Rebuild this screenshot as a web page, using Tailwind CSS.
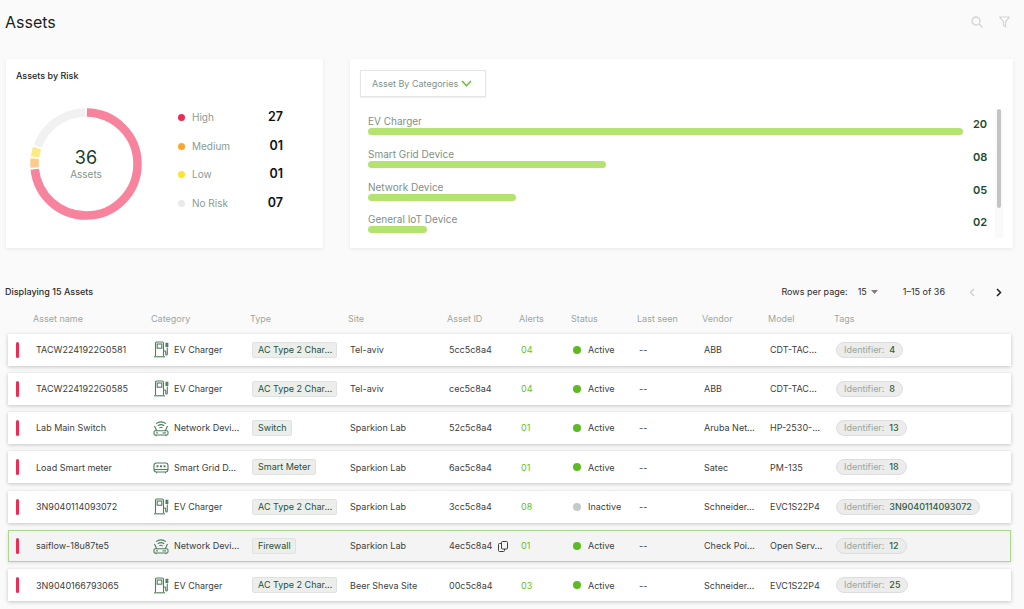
<!DOCTYPE html>
<html>
<head>
    <title>Assets</title>
    <meta charset="UTF-8">
    <meta name="viewport" content="width=device-width, initial-scale=1.0">
    <script src="https://cdn.jsdelivr.net/npm/@tailwindcss/browser@4"></script>
</head>
<body class="h-[609px] overflow-hidden bg-[#fafafa] font-['Inter',sans-serif] text-[9px] text-[#3c403d]">
    <!-- shared row icons -->
    <svg class="hidden">
        <symbol id="ev" viewBox="0 0 16 17">
            <g fill="none" stroke="#4f7f5e" stroke-width="1.1">
                <path d="M2.5 15V2.2q0-1.2 1.2-1.2h5.6q1.2 0 1.2 1.2V15"/>
                <rect x="4.2" y="3" width="4.6" height="4.2"/>
                <path d="M1 15.8h11"/>
                <path d="M10.5 10h1.4q.8 0 .8.8v2.2q0 1 .8 1t.8-1V6.5"/>
                <path d="M13 2.2h1.8v3.3H13z" fill="#4f7f5e"/>
            </g>
        </symbol>
        <symbol id="net" viewBox="0 0 16 17">
            <g fill="none" stroke="#4f7f5e" stroke-width="1.1">
                <path d="M3 3.600Q8 .2 13 3.600"/>
                <path d="M4.800 5.800Q8 3.400 11.200 5.800"/>
                <path d="M6.400 7.800Q8 6.600 9.600 7.800"/>
                <path d="M1.500 6l2.300 5M14.500 6l-2.300 5"/>
                <rect x="1" y="10.800" width="14" height="4.200" rx="1.200"/>
                <path d="M3 15v1.300M13 15v1.300"/>
                <path d="M9.500 12.900h3.500"/>
            </g>
            <circle cx="4" cy="12.900" r=".8" fill="#4f7f5e"/>
        </symbol>
        <symbol id="grid" viewBox="0 0 16 17">
            <g fill="none" stroke="#4f7f5e" stroke-width="1.1">
                <rect x="1" y="4" width="14" height="9" rx="2.500"/>
                <path d="M1 10.500h14"/>
                <path d="M3.500 13v1.200M12.500 13v1.200"/>
            </g>
            <g fill="#4f7f5e">
                <rect x="3.500" y="6.300" width="2" height="2"/>
                <rect x="7" y="6.300" width="2" height="2"/>
                <rect x="10.500" y="6.300" width="2" height="2"/>
            </g>
        </symbol>
    </svg>

    <header class="flex h-[44px] items-center justify-between pl-[5px] pr-[14px]">
        <h1 class="text-[16px] font-normal text-[#1c1f1d]">Assets</h1>
        <div class="flex items-center gap-[16px]">
            <svg class="h-[12px] w-[12px]" viewBox="0 0 12 12" fill="none" stroke="#d2d4d2" stroke-width="1.300"><circle cx="5" cy="5" r="4"/><path d="M8 8l3.500 3.500"/></svg>
            <svg class="h-[12px] w-[11px]" viewBox="0 0 11 12" fill="none" stroke="#d2d4d2" stroke-width="1.200"><path d="M.7 1h9.600L6.600 5.800v5L4.400 9.500V5.800z"/></svg>
        </div>
    </header>

    <section class="mt-[15px] flex h-[189px] pl-[6px] pr-[11px]">
        <!-- risk card -->
        <div class="w-[317px] shrink-0 bg-white px-[10px] pt-[11px] shadow-[0_1px_4px_rgba(0,0,0,0.08)]">
            <h2 class="text-[9px] font-medium leading-[12px] text-[#1c1f1d]">Assets by Risk</h2>
            <div class="mt-[26px] flex items-start">
                <div class="relative ml-[14px] h-[112px] w-[112px] shrink-0">
                    <svg class="h-full w-full -rotate-90" viewBox="0 0 112 112" fill="none" stroke-width="8.500">
                        <circle cx="56" cy="56" r="51.500" pathLength="360" stroke="#f8839c" stroke-dasharray="263 97" stroke-dashoffset="-1"/>
                        <circle cx="56" cy="56" r="51.500" pathLength="360" stroke="#fdcb8a" stroke-dasharray="10 350" stroke-dashoffset="-266"/>
                        <circle cx="56" cy="56" r="51.500" pathLength="360" stroke="#fdeb80" stroke-dasharray="10 350" stroke-dashoffset="-278"/>
                        <circle cx="56" cy="56" r="51.500" pathLength="360" stroke="#f1f1f1" stroke-dasharray="69 291" stroke-dashoffset="-290"/>
                    </svg>
                    <div class="absolute inset-0 flex flex-col items-center justify-center">
                        <span class="text-[18px] leading-[20px] text-[#17402a]">36</span>
                        <span class="text-[10px] leading-[13px] text-[#83968a]">Assets</span>
                    </div>
                </div>
                <ul class="-mt-[5px] ml-[36px] w-[105px]">
                    <li class="flex h-[28.700px] items-center"><span class="h-[7px] w-[7px] rounded-full bg-[#ee2a55]"></span><span class="ml-[7px] flex-1 text-[10px] text-[#8a9b90]">High</span><span class="text-[12.500px] font-semibold text-[#111]">27</span></li>
                    <li class="flex h-[28.700px] items-center"><span class="h-[7px] w-[7px] rounded-full bg-[#fba62d]"></span><span class="ml-[7px] flex-1 text-[10px] text-[#8a9b90]">Medium</span><span class="text-[12.500px] font-semibold text-[#111]">01</span></li>
                    <li class="flex h-[28.700px] items-center"><span class="h-[7px] w-[7px] rounded-full bg-[#fde32c]"></span><span class="ml-[7px] flex-1 text-[10px] text-[#8a9b90]">Low</span><span class="text-[12.500px] font-semibold text-[#111]">01</span></li>
                    <li class="flex h-[28.700px] items-center"><span class="h-[7px] w-[7px] rounded-full bg-[#eaeaea]"></span><span class="ml-[7px] flex-1 text-[10px] text-[#8a9b90]">No Risk</span><span class="text-[12.500px] font-semibold text-[#111]">07</span></li>
                </ul>
            </div>
        </div>

        <!-- categories card -->
        <div class="ml-[27px] flex-1 bg-white pl-[10px] pt-[11px] shadow-[0_1px_4px_rgba(0,0,0,0.08)]">
            <button class="flex h-[27px] w-[126px] items-center justify-between whitespace-nowrap border border-[#e4e6e4] pl-[11px] pr-[13px] text-[9px] text-[#82938a] shadow-[0_1px_1px_rgba(0,0,0,0.05)]">
                Asset By Categories
                <svg class="h-[7px] w-[11px]" viewBox="0 0 11 7" fill="none" stroke="#62bf2a" stroke-width="1.400"><path d="M1 1l4.500 4.700L10 1"/></svg>
            </button>
            <div class="relative mt-[18px] h-[123px]">
                <div class="absolute -top-[6px] right-[10px] h-[129px] w-[8px] bg-[#fafafa]">
                    <div class="mx-auto h-[99px] w-[4px] rounded-full bg-[#c4c4c4]"></div>
                </div>
                <div class="flex h-[32.800px] pl-[8px]">
                    <div class="w-[595px]">
                        <div class="text-[10px] leading-[13px] text-[#7f9085]">EV Charger</div>
                        <div class="h-[7px] rounded-full bg-[#b5e36f]"></div>
                    </div>
                    <span class="ml-[10px] mt-[3px] text-[11px] font-semibold leading-[13px] text-[#1d4a2d]">20</span>
                </div>
                <div class="flex h-[32.800px] pl-[8px]">
                    <div class="w-[595px]">
                        <div class="text-[10px] leading-[13px] text-[#7f9085]">Smart Grid Device</div>
                        <div class="h-[7px] w-[238px] rounded-full bg-[#b5e36f]"></div>
                    </div>
                    <span class="ml-[10px] mt-[3px] text-[11px] font-semibold leading-[13px] text-[#1d4a2d]">08</span>
                </div>
                <div class="flex h-[32.800px] pl-[8px]">
                    <div class="w-[595px]">
                        <div class="text-[10px] leading-[13px] text-[#7f9085]">Network Device</div>
                        <div class="h-[7px] w-[148px] rounded-full bg-[#b5e36f]"></div>
                    </div>
                    <span class="ml-[10px] mt-[3px] text-[11px] font-semibold leading-[13px] text-[#1d4a2d]">05</span>
                </div>
                <div class="flex h-[24px] pl-[8px]">
                    <div class="w-[595px]">
                        <div class="text-[10px] leading-[13px] text-[#7f9085]">General IoT Device</div>
                        <div class="h-[7px] w-[59px] rounded-full bg-[#b5e36f]"></div>
                    </div>
                    <span class="ml-[10px] mt-[3px] text-[11px] font-semibold leading-[13px] text-[#1d4a2d]">02</span>
                </div>
            </div>
        </div>
    </section>

    <section class="mt-[37px]">
        <div class="flex h-[14px] items-center pl-[5px] pr-[22px] text-[#2a2d2b]">
            <span class="font-medium">Displaying 15 Assets</span>
            <span class="ml-auto">Rows per page:</span>
            <span class="ml-[10px]">15</span>
            <svg class="ml-[4px] h-[4px] w-[7px]" viewBox="0 0 7 4" fill="#7c7f7d"><path d="M0 0h7L3.500 4z"/></svg>
            <span class="ml-[25px]">1–15 of 36</span>
            <svg class="ml-[24px] h-[9px] w-[6px]" viewBox="0 0 6 9" fill="none" stroke="#c9cbc9" stroke-width="1.200"><path d="M5 1L1.500 4.500 5 8"/></svg>
            <svg class="ml-[21px] h-[9px] w-[6px]" viewBox="0 0 6 9" fill="none" stroke="#222" stroke-width="1.500"><path d="M1 1l3.500 3.500L1 8"/></svg>
        </div>

        <div class="ml-[6px] mt-[13px] grid h-[14px] grid-cols-[28px_117px_99px_98px_99px_72px_52px_66px_65px_66px_66px_1fr] items-center text-[#9aa89f]">
            <span class="col-start-2 -ml-[1px]">Asset name</span><span>Category</span><span>Type</span><span>Site</span><span>Asset ID</span><span>Alerts</span><span>Status</span><span>Last seen</span><span>Vendor</span><span>Model</span><span>Tags</span>
        </div>

        <div class="ml-[8px] mr-[13px] mt-[7.500px] flex flex-col gap-[7.330px]">
            <div class="grid h-[32px] grid-cols-[28px_117px_99px_98px_99px_72px_52px_66px_65px_66px_66px_1fr] items-center bg-white shadow-[0_1px_4px_rgba(0,0,0,0.22)]">
                <span class="ml-[8px] h-[16px] w-[2.500px] rounded-full bg-[#ee2a55]"></span>
                <span>TACW2241922G0581</span>
                <span class="flex items-center"><svg class="h-[17px] w-[16px]"><use href="#ev"/></svg><span class="ml-[5px]">EV Charger</span></span>
                <span class="justify-self-start rounded-[2px] border border-[#e0e2e0] bg-[#eceeec] pl-[5px] pr-[4px] py-[1px] leading-[12px] text-[#24523a]">AC Type 2 Char…</span>
                <span>Tel-aviv</span><span>5cc5c8a4</span><span class="text-[#62bf2a]">04</span>
                <span class="flex items-center"><span class="h-[8px] w-[8px] rounded-full bg-[#5cbb22]"></span><span class="ml-[7px]">Active</span></span>
                <span>--</span><span>ABB</span><span>CDT-TAC…</span>
                <span class="justify-self-start rounded-full border border-[#dcdedc] bg-[#ececec] px-[7px] py-[1px] leading-[12px] text-[#98a79d]">Identifier:<b class="ml-[5px] font-medium text-[#2f5d3e]">4</b></span>
            </div>
            <div class="grid h-[32px] grid-cols-[28px_117px_99px_98px_99px_72px_52px_66px_65px_66px_66px_1fr] items-center bg-white shadow-[0_1px_4px_rgba(0,0,0,0.22)]">
                <span class="ml-[8px] h-[16px] w-[2.500px] rounded-full bg-[#ee2a55]"></span>
                <span>TACW2241922G0585</span>
                <span class="flex items-center"><svg class="h-[17px] w-[16px]"><use href="#ev"/></svg><span class="ml-[5px]">EV Charger</span></span>
                <span class="justify-self-start rounded-[2px] border border-[#e0e2e0] bg-[#eceeec] pl-[5px] pr-[4px] py-[1px] leading-[12px] text-[#24523a]">AC Type 2 Char…</span>
                <span>Tel-aviv</span><span>cec5c8a4</span><span class="text-[#62bf2a]">04</span>
                <span class="flex items-center"><span class="h-[8px] w-[8px] rounded-full bg-[#5cbb22]"></span><span class="ml-[7px]">Active</span></span>
                <span>--</span><span>ABB</span><span>CDT-TAC…</span>
                <span class="justify-self-start rounded-full border border-[#dcdedc] bg-[#ececec] px-[7px] py-[1px] leading-[12px] text-[#98a79d]">Identifier:<b class="ml-[5px] font-medium text-[#2f5d3e]">8</b></span>
            </div>
            <div class="grid h-[32px] grid-cols-[28px_117px_99px_98px_99px_72px_52px_66px_65px_66px_66px_1fr] items-center bg-white shadow-[0_1px_4px_rgba(0,0,0,0.22)]">
                <span class="ml-[8px] h-[16px] w-[2.500px] rounded-full bg-[#ee2a55]"></span>
                <span>Lab Main Switch</span>
                <span class="flex items-center"><svg class="h-[17px] w-[16px]"><use href="#net"/></svg><span class="ml-[5px]">Network Devi…</span></span>
                <span class="justify-self-start rounded-[2px] border border-[#e0e2e0] bg-[#eceeec] pl-[5px] pr-[4px] py-[1px] leading-[12px] text-[#24523a]">Switch</span>
                <span>Sparkion Lab</span><span>52c5c8a4</span><span class="text-[#62bf2a]">01</span>
                <span class="flex items-center"><span class="h-[8px] w-[8px] rounded-full bg-[#5cbb22]"></span><span class="ml-[7px]">Active</span></span>
                <span>--</span><span>Aruba Net…</span><span>HP-2530-…</span>
                <span class="justify-self-start rounded-full border border-[#dcdedc] bg-[#ececec] px-[7px] py-[1px] leading-[12px] text-[#98a79d]">Identifier:<b class="ml-[5px] font-medium text-[#2f5d3e]">13</b></span>
            </div>
            <div class="grid h-[32px] grid-cols-[28px_117px_99px_98px_99px_72px_52px_66px_65px_66px_66px_1fr] items-center bg-white shadow-[0_1px_4px_rgba(0,0,0,0.22)]">
                <span class="ml-[8px] h-[16px] w-[2.500px] rounded-full bg-[#ee2a55]"></span>
                <span>Load Smart meter</span>
                <span class="flex items-center"><svg class="h-[17px] w-[16px]"><use href="#grid"/></svg><span class="ml-[5px]">Smart Grid D…</span></span>
                <span class="justify-self-start rounded-[2px] border border-[#e0e2e0] bg-[#eceeec] pl-[5px] pr-[4px] py-[1px] leading-[12px] text-[#24523a]">Smart Meter</span>
                <span>Sparkion Lab</span><span>6ac5c8a4</span><span class="text-[#62bf2a]">01</span>
                <span class="flex items-center"><span class="h-[8px] w-[8px] rounded-full bg-[#5cbb22]"></span><span class="ml-[7px]">Active</span></span>
                <span>--</span><span>Satec</span><span>PM-135</span>
                <span class="justify-self-start rounded-full border border-[#dcdedc] bg-[#ececec] px-[7px] py-[1px] leading-[12px] text-[#98a79d]">Identifier:<b class="ml-[5px] font-medium text-[#2f5d3e]">18</b></span>
            </div>
            <div class="grid h-[32px] grid-cols-[28px_117px_99px_98px_99px_72px_52px_66px_65px_66px_66px_1fr] items-center bg-white shadow-[0_1px_4px_rgba(0,0,0,0.22)]">
                <span class="ml-[8px] h-[16px] w-[2.500px] rounded-full bg-[#ee2a55]"></span>
                <span>3N9040114093072</span>
                <span class="flex items-center"><svg class="h-[17px] w-[16px]"><use href="#ev"/></svg><span class="ml-[5px]">EV Charger</span></span>
                <span class="justify-self-start rounded-[2px] border border-[#e0e2e0] bg-[#eceeec] pl-[5px] pr-[4px] py-[1px] leading-[12px] text-[#24523a]">AC Type 2 Char…</span>
                <span>Sparkion Lab</span><span>3cc5c8a4</span><span class="text-[#62bf2a]">08</span>
                <span class="flex items-center"><span class="h-[8px] w-[8px] rounded-full bg-[#c2cbc5]"></span><span class="ml-[7px]">Inactive</span></span>
                <span>--</span><span>Schneider…</span><span>EVC1S22P4</span>
                <span class="justify-self-start rounded-full border border-[#dcdedc] bg-[#ececec] px-[7px] py-[1px] leading-[12px] text-[#98a79d]">Identifier:<b class="ml-[5px] font-medium text-[#2f5d3e]">3N9040114093072</b></span>
            </div>
            <div class="grid h-[32px] grid-cols-[28px_117px_99px_98px_99px_72px_52px_66px_65px_66px_66px_1fr] items-center bg-[#f4f4f4] shadow-[inset_0_0_0_1px_#a9d98a,0_1px_4px_rgba(0,0,0,0.12)]">
                <span class="ml-[8px] h-[16px] w-[2.500px] rounded-full bg-[#ee2a55]"></span>
                <span>saiflow-18u87te5</span>
                <span class="flex items-center"><svg class="h-[17px] w-[16px]"><use href="#net"/></svg><span class="ml-[5px]">Network Devi…</span></span>
                <span class="justify-self-start rounded-[2px] border border-[#e0e2e0] bg-[#eceeec] pl-[5px] pr-[4px] py-[1px] leading-[12px] text-[#24523a]">Firewall</span>
                <span>Sparkion Lab</span>
                <span class="flex items-center">4ec5c8a4<svg class="ml-[6px] h-[11px] w-[10px]" viewBox="0 0 10 11" fill="none" stroke="#3c403d"><rect x="3.500" y=".5" width="6" height="7.500" rx="1"/><path d="M3.500 2.500H1.500q-1 0-1 1v6q0 1 1 1h4q1 0 1-1V8"/></svg></span>
                <span class="text-[#62bf2a]">01</span>
                <span class="flex items-center"><span class="h-[8px] w-[8px] rounded-full bg-[#5cbb22]"></span><span class="ml-[7px]">Active</span></span>
                <span>--</span><span>Check Poi…</span><span>Open Serv…</span>
                <span class="justify-self-start rounded-full border border-[#dcdedc] bg-[#ececec] px-[7px] py-[1px] leading-[12px] text-[#98a79d]">Identifier:<b class="ml-[5px] font-medium text-[#2f5d3e]">12</b></span>
            </div>
            <div class="grid h-[32px] grid-cols-[28px_117px_99px_98px_99px_72px_52px_66px_65px_66px_66px_1fr] items-center bg-white shadow-[0_1px_4px_rgba(0,0,0,0.22)]">
                <span class="ml-[8px] h-[16px] w-[2.500px] rounded-full bg-[#ee2a55]"></span>
                <span>3N9040166793065</span>
                <span class="flex items-center"><svg class="h-[17px] w-[16px]"><use href="#ev"/></svg><span class="ml-[5px]">EV Charger</span></span>
                <span class="justify-self-start rounded-[2px] border border-[#e0e2e0] bg-[#eceeec] pl-[5px] pr-[4px] py-[1px] leading-[12px] text-[#24523a]">AC Type 2 Char…</span>
                <span>Beer Sheva Site</span><span>00c5c8a4</span><span class="text-[#62bf2a]">03</span>
                <span class="flex items-center"><span class="h-[8px] w-[8px] rounded-full bg-[#5cbb22]"></span><span class="ml-[7px]">Active</span></span>
                <span>--</span><span>Schneider…</span><span>EVC1S22P4</span>
                <span class="justify-self-start rounded-full border border-[#dcdedc] bg-[#ececec] px-[7px] py-[1px] leading-[12px] text-[#98a79d]">Identifier:<b class="ml-[5px] font-medium text-[#2f5d3e]">25</b></span>
            </div>
            <div class="h-0 shadow-[0_0_4px_rgba(0,0,0,0.2)]"></div>
        </div>
    </section>
</body>
</html>
